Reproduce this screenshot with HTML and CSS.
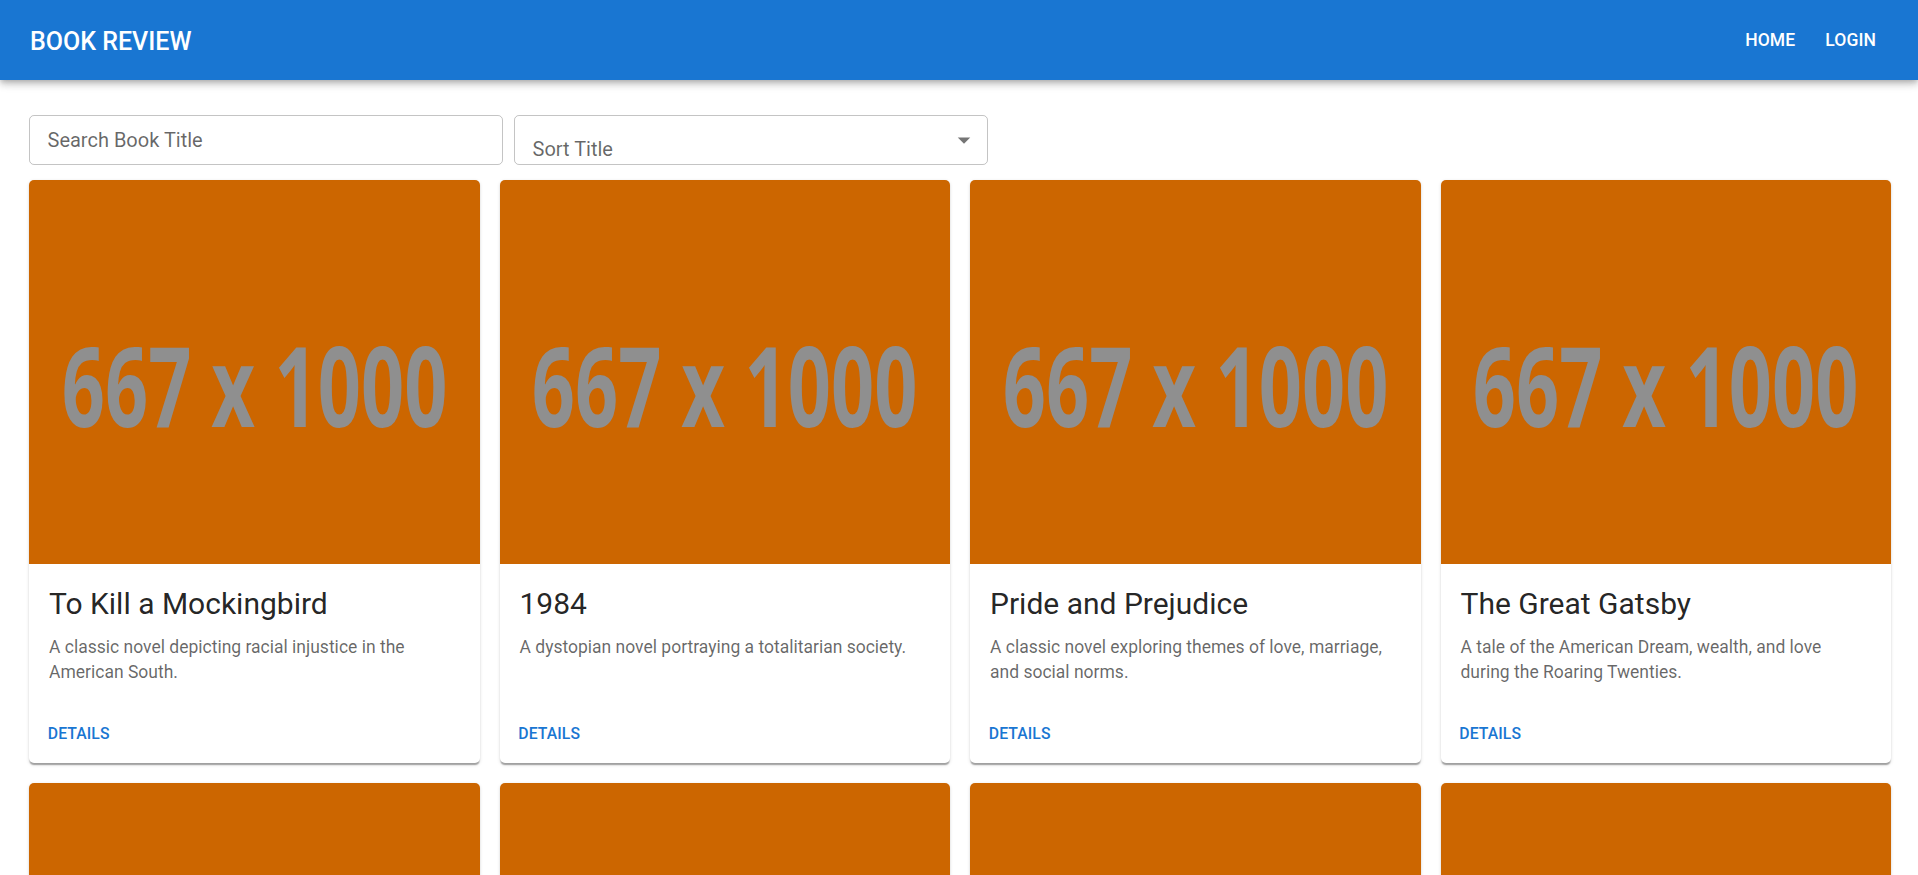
FILE: index.html
```html
<!DOCTYPE html>
<html lang="en">
<head>
<meta charset="utf-8">
<title>Book Review</title>
<link rel="stylesheet" href="styles.css">
</head>
<body>
<header class="appbar">
  <div class="toolbar">
    <div class="brand">Book Review</div>
    <nav class="nav">
      <a class="nav-link" href="#">Home</a>
      <a class="nav-link" href="#">Login</a>
    </nav>
  </div>
</header>
<main class="main">
  <div class="filters">
    <div class="field"><span class="placeholder">Search Book Title</span></div>
    <div class="field select">
      <span class="select-value">Sort Title</span>
      <svg class="select-icon" viewBox="0 0 24 24" width="30" height="30"><path d="M7 10l5 5 5-5z"/></svg>
    </div>
  </div>
  <div class="grid">
    <article class="card">
      <div class="cover"><span class="cover-text">667 x 1000</span></div>
      <div class="content">
        <h2 class="title">To Kill a Mockingbird</h2>
        <p class="desc">A classic novel depicting racial injustice in the American South.</p>
      </div>
      <div class="actions"><a class="btn" href="#">Details</a></div>
    </article>
    <article class="card">
      <div class="cover"><span class="cover-text">667 x 1000</span></div>
      <div class="content">
        <h2 class="title">1984</h2>
        <p class="desc">A dystopian novel portraying a totalitarian society.</p>
      </div>
      <div class="actions"><a class="btn" href="#">Details</a></div>
    </article>
    <article class="card">
      <div class="cover"><span class="cover-text">667 x 1000</span></div>
      <div class="content">
        <h2 class="title">Pride and Prejudice</h2>
        <p class="desc">A classic novel exploring themes of love, marriage, and social norms.</p>
      </div>
      <div class="actions"><a class="btn" href="#">Details</a></div>
    </article>
    <article class="card">
      <div class="cover"><span class="cover-text">667 x 1000</span></div>
      <div class="content">
        <h2 class="title">The Great Gatsby</h2>
        <p class="desc">A tale of the American Dream, wealth, and love during the Roaring Twenties.</p>
      </div>
      <div class="actions"><a class="btn" href="#">Details</a></div>
    </article>
    <article class="card">
      <div class="cover"><span class="cover-text">667 x 1000</span></div>
      <div class="content">
        <h2 class="title">The Catcher in the Rye</h2>
        <p class="desc">A story of teenage alienation and the search for identity.</p>
      </div>
      <div class="actions"><a class="btn" href="#">Details</a></div>
    </article>
    <article class="card">
      <div class="cover"><span class="cover-text">667 x 1000</span></div>
      <div class="content">
        <h2 class="title">Moby-Dick</h2>
        <p class="desc">An epic tale of obsession and the hunt for a great white whale.</p>
      </div>
      <div class="actions"><a class="btn" href="#">Details</a></div>
    </article>
    <article class="card">
      <div class="cover"><span class="cover-text">667 x 1000</span></div>
      <div class="content">
        <h2 class="title">Jane Eyre</h2>
        <p class="desc">A novel following the life and love of an orphaned governess.</p>
      </div>
      <div class="actions"><a class="btn" href="#">Details</a></div>
    </article>
    <article class="card">
      <div class="cover"><span class="cover-text">667 x 1000</span></div>
      <div class="content">
        <h2 class="title">Brave New World</h2>
        <p class="desc">A vision of a future society driven by technology and control.</p>
      </div>
      <div class="actions"><a class="btn" href="#">Details</a></div>
    </article>
  </div>
</main>
</body>
</html>
```

FILE: styles.css
```css
* { box-sizing: border-box; }
html { scrollbar-width: none; }
html::-webkit-scrollbar { display: none; }
body {
  margin: 0;
  font-family: Roboto, "Noto Sans", Arial, sans-serif;
  background: #fff;
}

.appbar {
  position: relative;
  z-index: 1;
  background: #1976d2;
  color: #fff;
  box-shadow: 0 2.5px 5px -1.25px rgba(0,0,0,0.2), 0 5px 6.25px 0 rgba(0,0,0,0.14), 0 1.25px 12.5px 0 rgba(0,0,0,0.12);
}
.toolbar {
  height: 80px;
  display: flex;
  align-items: center;
  justify-content: space-between;
  padding: 0 32px 0 30px;
}
.brand {
  font-size: 25px;
  font-weight: 500;
  line-height: 1.6;
  letter-spacing: 0;
  text-transform: uppercase;
  padding-top: 3px;
}
.nav { display: flex; gap: 10px; }
.nav-link {
  color: #fff;
  text-decoration: none;
  font-size: 17.5px;
  font-weight: 500;
  line-height: 1.75;
  letter-spacing: 0.1px;
  text-transform: uppercase;
  padding: 7.5px 10px;
}

.main { padding: 35px 27px 0 29px; }
.filters { display: flex; gap: 11px; margin-bottom: 15px; }
.field {
  width: 474px;
  height: 50px;
  border: 1px solid rgba(0,0,0,0.23);
  border-radius: 5px;
  display: flex;
  align-items: center;
  padding: 0 17.5px;
  font-size: 20px;
  color: rgba(0,0,0,0.6);
}
.select { padding-right: 8px; }
.select-value { flex: 1; padding-top: 18px; }
.select-icon { fill: rgba(0,0,0,0.54); flex: none; }

.grid {
  display: grid;
  grid-template-columns: repeat(4, 1fr);
  gap: 20px;
}
.card {
  background: #fff;
  border-radius: 5px;
  overflow: hidden;
  display: flex;
  flex-direction: column;
  box-shadow: 0 2.5px 1.25px -1.25px rgba(0,0,0,0.2), 0 1.25px 1.25px 0 rgba(0,0,0,0.14), 0 1.25px 3.75px 0 rgba(0,0,0,0.12);
}
.cover {
  height: 384px;
  background: #cc6600;
  display: flex;
  align-items: center;
  justify-content: center;
  padding-top: 23px;
  overflow: hidden;
}
.cover-text {
  display: inline-block;
  font-family: "Open Sans", "DejaVu Sans", sans-serif;
  font-weight: 700;
  font-size: 112px;
  line-height: 1;
  color: #8f8f8f;
  white-space: nowrap;
  transform: scaleX(0.675);
}
.content { flex: 1; padding: 20px; }
.title {
  margin: 0 0 10.5px;
  font-size: 30px;
  font-weight: 400;
  line-height: 1.334;
  color: rgba(0,0,0,0.87);
}
.desc {
  margin: 0;
  font-size: 17.5px;
  line-height: 1.43;
  letter-spacing: 0;
  color: rgba(0,0,0,0.6);
}
.actions { display: flex; padding: 10px; }
.btn {
  color: #1976d2;
  text-decoration: none;
  font-size: 15.75px;
  font-weight: 500;
  line-height: 1.8;
  letter-spacing: 0.1px;
  text-transform: uppercase;
  padding: 5px 8.75px;
}
```
